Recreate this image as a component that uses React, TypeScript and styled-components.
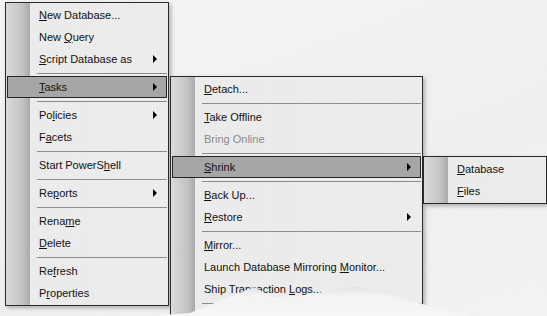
import React from 'react';
import styled, { createGlobalStyle } from 'styled-components';

const GlobalStyle = createGlobalStyle`
	html, body {
		margin: 0;
		padding: 0;
		background: #f1f1f1;
		overflow: hidden;
	}
	body {
		font-family: 'Liberation Sans', Arial, sans-serif;
	}
`;

type Entry =
	| { kind: 'sep' }
	| { kind: 'item'; label: string; key?: number; sub?: boolean; hl?: boolean; off?: boolean };

const item = (label: string, key?: number, extra: Partial<Entry> = {}): Entry =>
	({ kind: 'item', label, key, ...extra } as Entry);
const sep: Entry = { kind: 'sep' };

const mainMenu: Entry[] = [
	item('New Database...', 0),
	item('New Query', 4),
	item('Script Database as', 0, { sub: true }),
	sep,
	item('Tasks', 0, { sub: true, hl: true }),
	sep,
	item('Policies', 2, { sub: true }),
	item('Facets', 1),
	sep,
	item('Start PowerShell', 12),
	sep,
	item('Reports', 2, { sub: true }),
	sep,
	item('Rename', 4),
	item('Delete', 0),
	sep,
	item('Refresh', 2),
	item('Properties', 1),
];

const tasksMenu: Entry[] = [
	item('Detach...', 0),
	sep,
	item('Take Offline', 0),
	item('Bring Online', undefined, { off: true }),
	sep,
	item('Shrink', 0, { sub: true, hl: true }),
	sep,
	item('Back Up...', 0),
	item('Restore', 0, { sub: true }),
	sep,
	item('Mirror...', 0),
	item('Launch Database Mirroring Monitor...', 26),
	item('Ship Transaction Logs...', 17),
	sep,
];

const shrinkMenu: Entry[] = [item('Database', 0), item('Files', 0)];

const Desktop = styled.div`
	position: relative;
	width: 547px;
	height: 316px;
	overflow: hidden;
	background: linear-gradient(160deg, #f4f4f4 0%, #efefef 60%, #f2f2f2 100%);
`;

// $open: the menu runs on past the bottom of the screenshot
const Menu = styled.div<{ $x: number; $y: number; $w: number; $open?: boolean }>`
	position: absolute;
	left: ${(p) => p.$x}px;
	top: ${(p) => p.$y}px;
	width: ${(p) => p.$w}px;
	box-sizing: border-box;
	padding: 1px 1px ${(p) => (p.$open ? '24px' : '1px')};
	border: 1px solid #2a2a2a;
	background: linear-gradient(
		to right,
		#dadada 0,
		#c4c4c4 16px,
		#a9a9a9 24px,
		#ebebeb 24px,
		#ececec 100%
	);
	box-shadow: 2px 2px 4px rgba(0, 0, 0, 0.28);
	display: flex;
	flex-direction: column;
`;

const Item = styled.div<{ $hl?: boolean; $off?: boolean }>`
	display: flex;
	align-items: center;
	height: 22px;
	box-sizing: border-box;
	padding: 0 9px 0 31px;
	border: 1px solid ${(p) => (p.$hl ? '#262626' : 'transparent')};
	background: ${(p) => (p.$hl ? '#a6a6a6' : 'transparent')};
	color: ${(p) => (p.$off ? '#8a8a8a' : '#111')};
	font-size: 11px;
	white-space: nowrap;
`;

const Label = styled.span`
	flex: 1;
	& u {
		text-decoration: underline;
		text-underline-offset: 1px;
	}
`;

const Arrow = styled.span`
	width: 0;
	height: 0;
	border-left: 4px solid #000;
	border-top: 4px solid transparent;
	border-bottom: 4px solid transparent;
`;

const Sep = styled.div`
	height: 6px;
	display: flex;
	align-items: center;
	margin-left: 30px;
	&::after {
		content: '';
		flex: 1;
		height: 1px;
		background: #8c8c8c;
	}
`;

const Torn = styled.svg`
	position: absolute;
	left: 0;
	bottom: 0;
	width: 547px;
	height: 40px;
`;

const MenuList = ({ entries }: { entries: Entry[] }) => (
	<>
		{entries.map((e, i) => {
			if (e.kind === 'sep') return <Sep key={i} />;
			const k = e.key;
			const text =
				k === undefined ? (
					e.label
				) : (
					<>
						{e.label.slice(0, k)}
						<u>{e.label[k]}</u>
						{e.label.slice(k + 1)}
					</>
				);
			return (
				<Item key={i} $hl={e.hl} $off={e.off}>
					<Label>{text}</Label>
					{e.sub && <Arrow />}
				</Item>
			);
		})}
	</>
);

const App = (): JSX.Element => {
	return (
		<Desktop>
			<GlobalStyle />
			<Menu $x={5} $y={2} $w={164}>
				<MenuList entries={mainMenu} />
			</Menu>
			<Menu $x={170} $y={76} $w={253} $open>
				<MenuList entries={tasksMenu} />
			</Menu>
			<Menu $x={423} $y={156} $w={124}>
				<MenuList entries={shrinkMenu} />
			</Menu>
			{/* torn paper edge along the bottom of the screenshot */}
			<Torn viewBox="0 276 547 40">
				<defs>
					<linearGradient id="tornShade" x1="0" y1="0" x2="0" y2="1">
						<stop offset="0" stopColor="#e0e0e0" />
						<stop offset="0.3" stopColor="#f3f3f3" />
						<stop offset="1" stopColor="#f6f6f6" />
					</linearGradient>
				</defs>
				<polygon
					points="150,316 190,313 222,300 254,287 272,297 300,296 330,291 357,286 385,294 415,302 440,309 470,316"
					fill="url(#tornShade)"
				/>
			</Torn>
		</Desktop>
	);
};

export default App;
